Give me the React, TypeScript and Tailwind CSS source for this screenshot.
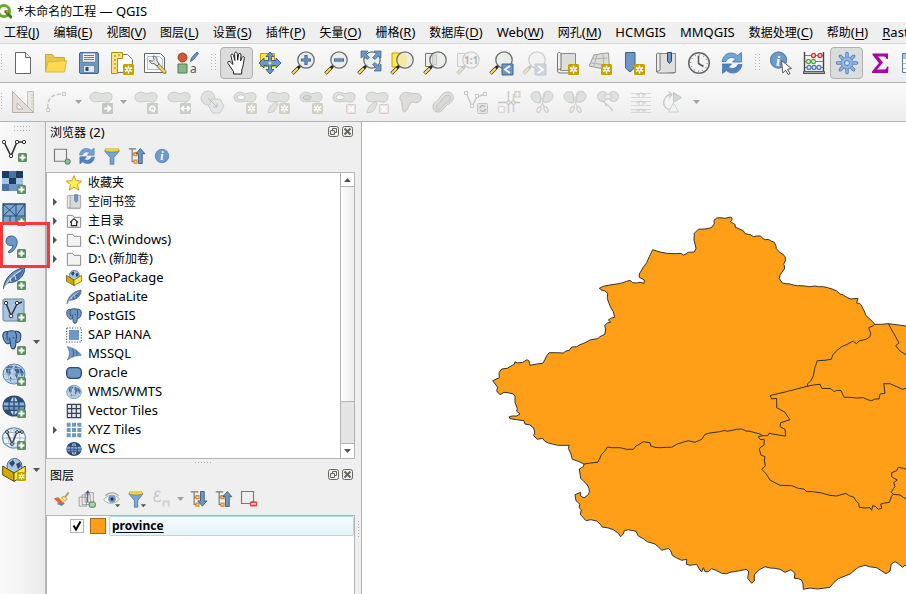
import { Fragment, type ReactNode } from "react";

/* ---------- shared drawing helpers ---------- */

function Svg({ children, className = "size-6" }: { children: ReactNode; className?: string }) {
  return (
    <svg viewBox="0 0 24 24" className={`${className} block shrink-0 overflow-visible`} fill="none" aria-hidden="true">
      {children}
    </svg>
  );
}

function Spark({ x = 13, y = 13, color = "#c4a000" }: { x?: number; y?: number; color?: string }) {
  return (
    <g transform={`translate(${x} ${y})`}>
      <rect width="11" height="11" rx="1.5" fill={color} />
      <path d="M5.5 1.5v8M2 3.5l7 4M9 3.5l-7 4" stroke="#fff" strokeWidth="1.5" />
      <circle cx="5.5" cy="5.5" r="2" fill="#fff" />
      <circle cx="5.5" cy="5.5" r="0.9" fill={color} />
    </g>
  );
}

function Plus({ x = 15, y = 15 }: { x?: number; y?: number }) {
  return (
    <g transform={`translate(${x} ${y})`}>
      <rect width="9" height="9" rx="1.5" fill="#5b8f5e" />
      <path d="M4.5 1.5v6M1.5 4.5h6" stroke="#fff" strokeWidth="2" />
    </g>
  );
}

function Lens({ children, muted = false }: { children?: ReactNode; muted?: boolean }) {
  return (
    <>
      <path d="M1.5 22.5l6-6" stroke={muted ? "#bdbdbd" : "#3c3a2a"} strokeWidth="3.6" />
      <path d="M1.8 22.2l5-5" stroke={muted ? "#e6e2c8" : "#fcd94f"} strokeWidth="2.2" />
      <path d="M7 17l3-3" stroke={muted ? "#c4c4c4" : "#222"} strokeWidth="2.6" />
      <circle cx="15" cy="9" r="8.2" fill={muted ? "#f1f1f1" : "#e9ebe9"} fillOpacity="0.85" stroke={muted ? "#cfcfcf" : "#6e6e6e"} strokeWidth="1.3" />
      {children}
    </>
  );
}

const BLUE = "#6d97c4";
const NAVY = "#2b4a70";

/* ---------- main toolbar icons ---------- */

const NewFile = (
  <Svg>
    <path d="M4.500 1.500h10l5 5v16h-15z" fill="#fff" stroke="#666" />
    <path d="M14.500 1.500v5h5" fill="#eee" stroke="#666" />
  </Svg>
);
const OpenFolder = (
  <Svg>
    <path d="M1.500 21V3.500h7l2 3h10V11" fill="#e8c64a" stroke="#c9a93a" />
    <path d="M1.500 21L4 11l18.500-1.500L20.500 21z" fill="#fcd94f" stroke="#d9b93f" />
  </Svg>
);
const SaveDisk = (
  <Svg>
    <rect x="2.500" y="1.500" width="19" height="21" rx="1.500" fill={BLUE} stroke="#43658c" />
    <path d="M5.500 2h13v9h-13z" fill="#f2f2f2" stroke="#55779f" strokeWidth="0.6" />
    <path d="M7 4.500h10M7 6.500h10M7 8.500h10" stroke="#777" />
    <path d="M6.500 14.500h11v7h-11z" fill="#e4e6e8" stroke="#43658c" strokeWidth="0.6" />
    <path d="M8.500 16h3v4h-3z" fill={NAVY} />
  </Svg>
);
const NewLayout = (
  <Svg>
    <path d="M2.500 3.500h15l5 5v13h-20z" fill="#fff" stroke="#777" />
    <path d="M1.500 1.500h11v6h-5v15h-6z" fill="#fbe27a" stroke="#b38f12" />
    <path d="M4 5h2M4 9h2M4 13h2M4 17h2M9 3v2" stroke="#a07f10" />
    <Spark />
  </Svg>
);
const LayoutManager = (
  <Svg>
    <path d="M1.500 2.500h16l4 4v15h-20z" fill="#fff" stroke="#666" />
    <path d="M4.500 5.500h12l3 3v10h-15z" fill="#f4f7fb" stroke="#a9c1de" />
    <path d="M14 13l7.500 8" stroke="#8a7a3a" strokeWidth="4" strokeLinecap="round" />
    <path d="M15 14l6.300 6.700" stroke="#f0d060" strokeWidth="2.500" strokeLinecap="round" />
    <path d="M10 5c2-.2 4.500 1.500 4 5l2 3-2 2-3-2.500c-2.500.7-4-.5-4.500-3l3 .8 1.500-1.800z" fill="#e5e5e5" stroke="#666" />
  </Svg>
);
const StyleManager = (
  <Svg>
    <circle cx="6.500" cy="6.500" r="4.500" fill="#cf5a30" stroke="#a5411d" />
    <path d="M14.500 10.500l1-3.500 5.500-6 1.500 1.500-5 6z" fill={BLUE} stroke="#43658c" />
    <path d="M2 13h9v9H2z" fill="#86b886" stroke="#4c7d4e" />
    <text x="14" y="22" fontSize="12" fill="#555" fontFamily="Noto Sans, sans-serif">a</text>
  </Svg>
);
const Hand = (
  <Svg>
    <path
      d="M8.500 23v-2.500L3 12.500c-1-1.600.9-3 2.300-1.600L8 13.500 6 5c-.5-2 1.800-2.600 2.400-.8L9.900 9.500 9.600 2.600c0-2 2.600-2 2.700 0l.4 6.600.9-5.800c.4-1.700 2.500-1.300 2.400.5l-.4 6 1.500-3.500c.7-1.600 2.700-.9 2.300.8-1 4-.9 7.800-2.700 11.800v4z"
      fill="#fff"
      stroke="#222"
      strokeLinejoin="round"
    />
  </Svg>
);
const PanSelection = (
  <Svg>
    <path d="M2.500 2.500h14v13h-14z" fill="#fce94f" stroke="#c4a000" />
    <path
      d="M12 1l4 4.500h-2.500v4H18V7l5 5-5 5v-2.500h-4.500v4H16L12 23l-4-4.500h2.500v-4H6V17l-5-5 5-5v2.500h4.500v-4H8z"
      fill={BLUE}
      stroke="#2f5b8c"
      strokeWidth="0.9"
      strokeLinejoin="round"
    />
    <path d="M10.800 10.800h2.400v2.400h-2.400z" fill="#fce94f" />
  </Svg>
);
const ZoomIn = (
  <Svg>
    <Lens>
      <path d="M15 4v10M10 9h10" stroke="#34618f" strokeWidth="3.200" />
      <path d="M15 4.700v8.600M10.700 9h8.600" stroke={BLUE} strokeWidth="1.600" />
    </Lens>
  </Svg>
);
const ZoomOut = (
  <Svg>
    <Lens>
      <path d="M10 9h10" stroke="#34618f" strokeWidth="3.200" />
      <path d="M10.700 9h8.600" stroke={BLUE} strokeWidth="1.600" />
    </Lens>
  </Svg>
);
const ZoomFull = (
  <Svg>
    <Lens />
    <path
      d="M4 0h7L8.500 2.500l4 4-2.500 2-3.500-3.500L4 7zM24 0h-7l2.500 2.500-4 4 2.500 2L21.500 5 24 7zM24 20h-7l2.500-2.500-4-4 2.500-2 3.500 3.500L24 13z"
      fill={BLUE}
      stroke="#3b648f"
      strokeWidth="0.7"
    />
  </Svg>
);
const ZoomSelection = (
  <Svg>
    <path d="M2 2h11v14H2z" fill="#fce94f" stroke="#c4a000" />
    <Lens>
      <path d="M15 3c3 2 3 10 0 13-4 0-7-3-7-7s3-6.500 7-6z" fill="#f2eaa5" />
    </Lens>
  </Svg>
);
const ZoomLayer = (
  <Svg>
    <path d="M2.500 2.500h11v13h-11z" fill="#eee" stroke="#777" />
    <Lens>
      <path d="M9.500 4.500h4v9h-4z" fill="#dcdedc" stroke="#c5c8c5" />
    </Lens>
  </Svg>
);
const ZoomNative = (
  <Svg>
    <path d="M1.500 2.500h11v13h-11z" fill="#f1f1f1" stroke="#ccc" />
    <Lens muted />
    <text x="8" y="13" fontSize="10" fontWeight="700" fill="#b4b4b4" fontFamily="Noto Sans, sans-serif">1:1</text>
  </Svg>
);
const ZoomLast = (
  <Svg>
    <Lens />
    <path d="M13 13h11v11H13z" fill={BLUE} stroke="#3f6792" />
    <path d="M21 15l-5 3.500 5 3.500" stroke="#fff" strokeWidth="1.800" />
  </Svg>
);
const ZoomNext = (
  <Svg>
    <Lens muted />
    <path d="M13 13h11v11H13z" fill="#cdd3d9" stroke="#c4c9ce" />
    <path d="M16 15l5 3.500-5 3.500" stroke="#fff" strokeWidth="1.800" />
  </Svg>
);
const NewMapView = (
  <Svg>
    <path d="M5.500 2.500h15v17h-15z" fill="#dcdddc" stroke="#8a8a8a" />
    <path d="M2.500 3c0-2 3.500-2 3.500 0v15c-2 0-3.500.5-3.500 2zM2.500 20c0 1.500 1 2 2.500 2h9" fill="#eee" stroke="#777" />
    <Spark />
  </Svg>
);
const New3DView = (
  <Svg>
    <path d="M1 15l5-11 8-1.500L20.500 2l1 17z" fill="#dcdcdb" stroke="#9b9b9b" />
    <path d="M5 8l14-1M3 12l16 2M9 4l-3 11M15 3l1 14" stroke="#b2b2b0" />
    <Spark />
  </Svg>
);
const NewBookmark = (
  <Svg>
    <path d="M4.500 1.500h9.500v15L9 21l-4.500-4z" fill={BLUE} stroke="#3b648f" />
    <Spark />
  </Svg>
);
const ShowBookmarks = (
  <Svg>
    <path d="M5.500 2.500h16v19h-16z" fill="#dedfde" stroke="#8a8a8a" />
    <path d="M2.500 3c0-1 3.500-1.500 3.500 0v16c0 1-3.500 1-3.500 2zM2.500 20c0 2 2 2 3 2h15" fill="#eee" stroke="#777" />
    <path d="M13.500 1.500h4V10l-2 2.500-2-2.500z" fill={BLUE} stroke={NAVY} />
  </Svg>
);
const Clock = (
  <Svg>
    <circle cx="12" cy="12" r="10.300" fill="#f2f3f2" stroke="#666" strokeWidth="1.500" />
    <circle cx="12" cy="12" r="8.300" stroke="#6d97c4" strokeWidth="1.300" strokeDasharray="0.9 3.440" />
    <path d="M11.500 4.500v8l5 3" stroke="#555" strokeWidth="1.500" />
  </Svg>
);
function Refresh({ className = "size-6" }: { className?: string }) {
  return (
    <Svg className={className}>
      <path d="M2 10.500C3 5 6.500 2 11 2c3 0 5 1 6.500 2.500L21.500 1.500v9.500h-9l3-3.200C12.500 5.500 8 6 6 10.500z" fill="#75a5d8" stroke="#3f74ad" strokeWidth="0.8" />
      <path d="M22 13.500C21 19 17.500 22 13 22c-3 0-5-1-6.500-2.500L2.500 22.500V13h9l-3 3.200c3 2.300 7.500 1.800 9.500-2.700z" fill="#4f84bf" stroke="#3f74ad" strokeWidth="0.800" />
    </Svg>
  );
}
const Identify = (
  <Svg>
    <circle cx="9.500" cy="9" r="8.600" fill="#6c9bc9" />
    <circle cx="9.500" cy="9" r="8" stroke="#4f7fb1" />
    <text x="7" y="14.500" fontSize="15" fontStyle="italic" fontWeight="700" fill="#fff" fontFamily="Liberation Serif, serif">i</text>
    <path d="M12.500 9.500l10 8-4 .8 2.500 4.200-2 1-2.400-4.300-2.800 2.800z" fill="#fff" stroke="#555" />
  </Svg>
);
const Abacus = (
  <Svg>
    <path d="M2.500 1v19.500M21.500 1v19.500M1 22h22" stroke="#444" strokeWidth="1.400" />
    <path d="M1.500 20.500h21v2h-21z" fill="#aaa" stroke="#444" strokeWidth="0.800" />
    <path d="M3 4.500h18M3 10.500h18M3 16.500h18" stroke="#777" />
    <g fill="#fbe3e3" stroke="#c13c34" strokeWidth="1.300">
      <circle cx="11.500" cy="4.500" r="2" />
      <circle cx="18" cy="4.500" r="2" />
    </g>
    <g fill="#e6f6e3" stroke="#5da357" strokeWidth="1.300">
      <circle cx="6.500" cy="10.500" r="2" />
      <circle cx="11.500" cy="10.500" r="2" />
    </g>
    <g fill="#e4eef9" stroke="#4f80b4" strokeWidth="1.300">
      <circle cx="7" cy="16.500" r="2" />
      <circle cx="12" cy="16.500" r="2" />
      <circle cx="17" cy="16.500" r="2" />
    </g>
  </Svg>
);
const Gear = (
  <Svg>
    <g stroke="#4f80bb" strokeWidth="3.400" strokeLinecap="round">
      <path d="M12 2.500v19M2.500 12h19M5.300 5.300l13.400 13.400M18.700 5.300L5.300 18.700" />
    </g>
    <g stroke="#8db4e2" strokeWidth="1.900" strokeLinecap="round">
      <path d="M12 2.700v18.600M2.700 12h18.600M5.500 5.500l13 13M18.500 5.500l-13 13" />
    </g>
    <circle cx="12" cy="12" r="6" fill="#8db4e2" stroke="#6694cc" />
    <circle cx="12" cy="12" r="2.500" fill="#dcdcdc" stroke="#4f80bb" />
  </Svg>
);
const Sigma = (
  <Svg>
    <path d="M4.500 2.500H20V8h-1.500c-.5-2-1-2.600-3.500-2.600h-5l5 6.100-6 7h6c2.500 0 3.500-.5 4-3H20.500l-.5 6.500H4v-1.500l7-8.500-6.500-8z" fill="#ad00ad" />
  </Svg>
);
const TableIcon = (
  <Svg>
    <path d="M1.500 2.500h21v19h-21z" fill="#fff" stroke="#4f7fb1" />
    <path d="M2 3h20v4H2z" fill="#a9c6e6" />
    <path d="M2 7.500h20M2 12.500h20M2 17.500h20M8.500 7v14" stroke="#a0b8d2" />
  </Svg>
);

/* ---------- digitizing toolbar icons (all disabled) ---------- */

const BLOB = "M1 8c-.5-4 4-7 8-5.500 2.500 1 4 1.500 7 .5 3-1 7-.5 7 3.500s-3 6.500-6 5.500c-2.500-.8-4-1-7-.5C6 12.200 1.500 12 1 8z";
const LOBE = "M11 12C6 13 2.500 18 2 22.500c4 .5 7-1 8-4 .5-2.500 3-5 1-6.500z";
const FILL = "#dfe1df";
const LINE = "#c8cbc8";

function Shape({ children }: { children?: ReactNode }) {
  return (
    <Svg>
      <path d={BLOB} fill={FILL} stroke={LINE} />
      {children}
    </Svg>
  );
}
function Ring() {
  return <path d="M4 7.500c0-2 3-3.500 5-2.500 1.500 1 4 1 3 3s-8 2.500-8-.5z" fill="#f8f8f8" stroke="#c3c6c3" />;
}
function MutedCross({ x = 14, y = 14 }: { x?: number; y?: number }) {
  return (
    <g transform={`translate(${x} ${y})`}>
      <rect x="0.500" y="0.500" width="9" height="9" rx="1" fill="#ebe2e2" stroke="#dccaca" />
      <path d="M2.500 2.500l5 5M7.500 2.500l-5 5" stroke="#fff" strokeWidth="2" />
    </g>
  );
}
const Ruler = (
  <Svg>
    <path d="M16.500 1.500h6v21h-6z" fill="#ebe8e0" stroke="#c9c3bd" />
    <path d="M20 5h2M20 8h2M20 11h2M20 14h2M20 17h2" stroke="#c9c3bd" />
    <path d="M1.500 1.500l21 21h-21z" fill="#e3dfd8" stroke="#b9b0aa" />
    <path d="M6 13l6 6H6z" fill="#f8f8f8" stroke="#b9b0aa" />
  </Svg>
);
const CurveDigitize = (
  <Svg>
    <path d="M4 18c-1-8 3-14 14-14" stroke="#c6c6c6" strokeWidth="1.500" strokeDasharray="4 2" />
    <path d="M2.500 18.500h3v3h-3zM18.500 2.500h3v3h-3z" fill="#f4f4f4" stroke="#c6c6c6" />
  </Svg>
);
const MoveFeature = (
  <Shape>
    <rect x="13" y="13" width="11" height="11" rx="1" fill="#c3c6c5" />
    <path d="M15 18.500h6M18.500 15.500l3 3-3 3" stroke="#fff" strokeWidth="2" />
  </Shape>
);
const RotateFeature = (
  <Shape>
    <rect x="13" y="13" width="11" height="11" rx="1" fill="#cbcdcc" />
    <path d="M16.500 21c-2-3 .5-5.500 3-4.500 2.500 1.200 1.500 4.500-1 4.500M18 18.800l.5 2.500 2.500.2" stroke="#fff" strokeWidth="1.500" />
  </Shape>
);
const ScaleFeature = (
  <Shape>
    <rect x="13" y="13" width="11" height="11" rx="1" fill="#cbcdcc" />
    <path d="M15 18.500h7M17 16l-2.500 2.500L17 21M20 16l2.500 2.500L20 21" stroke="#fff" strokeWidth="1.500" />
  </Shape>
);
const Simplify = (
  <Svg>
    <circle cx="8" cy="8" r="7" fill={FILL} stroke={LINE} />
    <path d="M8.500 16l4-7h7.500l4 7-4 7h-7.500z" fill="#e3e7ea" stroke={LINE} />
    <path d="M8 8l9 9M17 13v4h-4" stroke="#bdbdbd" />
  </Svg>
);
const AddRing = (
  <Shape>
    <Ring />
    <Spark color="#d3cfc2" />
  </Shape>
);
const AddPart = (
  <Shape>
    <path d={LOBE} fill={FILL} stroke={LINE} />
    <Spark color="#d3cfc2" />
  </Shape>
);
const FillRing = (
  <Shape>
    <path d="M4 8c0-2 3-3.500 5-2.500 1.500 1 4 0 3 2.500s-8 2.500-8 0z" fill="#d3d5d0" stroke="#bcbeb9" />
    <Spark color="#d3cfc2" />
  </Shape>
);
const DeleteRing = (
  <Shape>
    <Ring />
    <MutedCross />
  </Shape>
);
const DeletePart = (
  <Shape>
    <path d={LOBE} fill={FILL} stroke={LINE} />
    <MutedCross />
  </Shape>
);
const Reshape = (
  <Svg>
    <path d="M2 9c-1-4 4-7.500 8-6.500 4 1 5 1 8 1 4 0 6 2 5 6-2 4-6 3.500-9 2.500-4 2-3 9-8 10-3-1 0-8-4-13z" fill="#dcdddb" stroke="#c3c6c3" />
    <path d="M3 13c2 3 1 8 3 9 4-1 4-8 8-10" stroke="#d8cfc0" />
  </Svg>
);
const OffsetCurve = (
  <Svg>
    <path d="M2 17c0-5 4-5 6-8s4-7 9-7c4 0 6 4 5 7-2 5-6 5-8 8s-4 5-7 5-5-2-5-5z" fill="#e2e0da" stroke="#c5c2b8" />
    <path d="M5 17c0-3 3-3 5-6s4-6 7-6 3 3 2 5c-2 3-5 3-7 6s-3 4-5 4-2-1-2-3z" fill="#d7dbd8" stroke="#c3c6c3" />
  </Svg>
);
const ReverseLine = (
  <Svg>
    <path d="M2 3l6 13 5-9 8-3" stroke="#c9c9c9" strokeWidth="1.500" />
    <path d="M.5 1.500h3v3h-3zM6.500 14.500h3v3h-3zM11.500 4.500h3v3h-3zM19.500 2.500h3v3h-3z" fill="#f4f4f4" stroke="#c9c9c9" />
    <rect x="13.500" y="13.500" width="10" height="10" rx="1" fill="#e4e4e4" stroke="#c4c4c4" />
    <path d="M16 18c1-3 4-3 5-1M21.500 19c-1 3-4 3-5 1" stroke="#b2b2b2" strokeWidth="1.400" />
  </Svg>
);
const TrimExtend = (
  <Svg>
    <path d="M11.500 1v22M16.500 4v18" stroke="#cfcfc8" strokeWidth="1.600" />
    <path d="M1 12.500h22" stroke="#c4c4c4" strokeWidth="1.500" />
    <path d="M10 11h3v3h-3zM15 11h3v3h-3z" fill="#f4f4f4" stroke="#c4c4c4" />
    <g transform="translate(17 1) scale(0.600)">
      <rect width="11" height="11" rx="1.500" fill="#d3cfc2" />
      <path d="M5.500 1.500v8M2 3.500l7 4M9 3.500l-7 4" stroke="#fff" strokeWidth="1.500" />
    </g>
    <g transform="translate(1 16) scale(0.700)">
      <MutedCross x={0} y={0} />
    </g>
  </Svg>
);
const Scissors = (
  <Svg>
    <path d="M1 6c0-4 5-5 8-4 2 2 2 7 1 11-5 0-9-3-9-7zM23 6c0-4-5-6-8-4-2 2-3 8-1 10 5 1 9-2 9-6z" fill={FILL} stroke={LINE} />
    <path d="M10 4l4 13M15 4l-4 13" stroke="#cfcfcf" />
    <ellipse cx="9" cy="19.500" rx="1.700" ry="3" transform="rotate(25 9 19.500)" stroke="#d3caca" strokeWidth="1.300" />
    <ellipse cx="16" cy="19.500" rx="1.700" ry="3" transform="rotate(-25 16 19.500)" stroke="#d3caca" strokeWidth="1.300" />
  </Svg>
);
const MergeFeatures = (
  <Svg>
    <circle cx="6.500" cy="6.500" r="5" fill={FILL} stroke={LINE} />
    <circle cx="17.500" cy="6.500" r="5" fill={FILL} stroke={LINE} />
    <path d="M9 4h6v5H9z" fill="#ebebeb" stroke={LINE} />
    <path d="M4 11c4 0 6 2 6 5M8 12c3 3 6 4 9 9" stroke="#cfcfcf" strokeWidth="1.500" />
  </Svg>
);
const MergeAttributes = (
  <Svg>
    <path d="M2 3.500h20M2 7.500h20M2 11.500h20M2 15.500h20M2 19.500h20M2 22.500h20" stroke="#d8d8d8" />
    <path d="M7 5l5-2 5 2M7 13l5-2 5 2M7 21l5-2 5 2M10 3v4M14 3v4M10 11v4M14 11v4M10 19v3M14 19v3" stroke="#cbcbcb" />
  </Svg>
);
const RotateSymbols = (
  <Svg>
    <path d="M9 20C2 19 0 13 3 8.500 4.500 5.500 7 4.500 9 4.500" stroke="#c8c8c8" strokeWidth="1.300" />
    <path d="M6.500 1.500l3.500 3-3 3.500" stroke="#c8c8c8" strokeWidth="1.300" />
    <path d="M11.500 2.500v10l8-5z" fill="#d3d7d3" stroke="#c3c6c3" />
    <path d="M11.500 13l5 9h-10z" fill="#f2f2f2" stroke="#cfcfcf" />
  </Svg>
);

/* ---------- data source icons ---------- */

function Elephant() {
  return (
    <>
      <path
        d="M1 8c-.5-4 2-6.500 6-6 2-1 7-1.500 9-.3C20 1 23.500 3 23 8c-.3 4-2 7-3.500 7-1.500.3-2 .5-2.500 0-.5 4 0 8-3.500 8-3 0-3-3.500-3.300-7.500C8 17 6.500 17.500 5 16 3 14 1.300 11 1 8z"
        fill={BLUE}
        stroke={NAVY}
        strokeWidth="1.300"
      />
      <path d="M7 2.500C5.500 6 6 10 7.500 12.500M16 2c2 3 2 8 .5 12.500M10 15.500c-.5-2 0-4-1-6M13 9.500h2" stroke={NAVY} strokeWidth="1.300" />
    </>
  );
}
function Feather() {
  return (
    <>
      <path d="M1.500 22.500C2 14 9 4 22.500 1.500c.5 5-2 10-7.500 13-4 2.500-8 1.500-9.500 2.500-1.500 1-2.500 3-4 5.500z" fill={BLUE} stroke={NAVY} />
      <path d="M5 17c4 0 9-1 12-5 2-2.500 4-6 5-9-5 3-12 8-17 14z" fill="#48709e" />
      <path d="M2 22C5 16 11 9 19 4.500M9 16l-1-4M14 14l-1.500-5" stroke="#dbe8f6" />
    </>
  );
}
function Earth() {
  return (
    <>
      <ellipse cx="12" cy="12" rx="11" ry="10" fill="#c3d8ee" stroke="#5c82ab" />
      <path d="M4 6c2-2 5-3 7-2l-1 3-2 1 1 3-2 3-3-4zM13 4l6 2 3 5-2 4-2-4-2 1-1 5-2-4 1-3-2-2zM8 14l2 3-2 3z" fill="#3f6690" />
      <path d="M2 12h20M4 6.500h16M4 17.500h16M12 2v20M12 2C4 6 4 18 12 22M12 2c8 4 8 16 0 20" stroke="#8fb0d4" strokeWidth="0.900" />
    </>
  );
}
function GridGlobe() {
  return (
    <>
      <ellipse cx="12" cy="12" rx="11.500" ry="10.500" fill={NAVY} />
      <path d="M2 8.500h4.500v3H1.500zM8 8.500h3.400v3H7.500zM12.600 8.500H16l.5 3h-3.900zM17.500 8.500H22l.5 3h-5z" fill="#8db4e0" />
      <path d="M1.500 12.700h4.800l.4 3H2.500zM7.500 12.700h3.900v3H8zM12.600 12.700h3.900l-.5 3h-3.400zM17.700 12.700h4.800l-1 3h-4z" fill="#6d97c4" />
      <path d="M8.500 7.300c.5-2 1.500-3.300 2.900-4.300v4.300zM12.600 7.300V3c1.400 1 2.400 2.300 2.900 4.300zM8.500 17h2.900v4c-1.400-.8-2.400-2-2.900-4zM12.600 17h2.900c-.5 2-1.500 3.200-2.900 4z" fill="#b9d2ee" />
    </>
  );
}
function Nodes() {
  return (
    <>
      <path d="M2 4l7 14 6-14h7" stroke="#333" strokeWidth="1.600" />
      <g fill="#fff" stroke="#333">
        <circle cx="2" cy="4" r="1.700" />
        <circle cx="9" cy="18" r="1.700" />
        <circle cx="15" cy="4" r="1.700" />
        <circle cx="22" cy="4" r="1.700" />
      </g>
    </>
  );
}
function Box() {
  return (
    <>
      <circle cx="12.500" cy="8" r="7.500" fill="#a9c5e4" stroke="#466a92" />
      <path d="M7 5l4-3 2 3-3 4zM14 6l4-2 1 4-3 3z" fill={NAVY} />
      <path d="M.7 8l11.300 7v8.300L.7 17z" fill="#d3a90c" stroke="#5e4b00" />
      <path d="M23.300 8L12 15v8.300L23.300 17z" fill="#fce94f" stroke="#5e4b00" />
    </>
  );
}

const dataSources: { label: string; icon: ReactNode; menu?: boolean; marked?: boolean }[] = [
  { label: "添加矢量图层", icon: <Svg><Nodes /><Plus x={16} y={15} /></Svg> },
  {
    label: "添加栅格图层",
    icon: (
      <Svg>
        <path d="M0 1h21v20H0z" fill={BLUE} />
        <path d="M0 1h7v7H0zM14 1h7v7h-7zM7 8h7v6H7z" fill="#1d3c61" />
        <path d="M7 1h7v7H7zM0 14h7v7H0z" fill="#4a74a4" />
        <path d="M0 8h7v6H0zM14 8h7v6h-7z" fill="#a4c2e2" />
        <Plus />
      </Svg>
    ),
  },
  {
    label: "添加网格图层",
    icon: (
      <Svg>
        <path d="M1 2h22v19H1z" fill="#7ba5d3" stroke={NAVY} strokeWidth="1.300" />
        <path d="M14 2v19M1 14h22M1 2l13 12M14 2L1 14M23 2l-9 12M8 14v7" stroke={NAVY} />
        <Plus />
      </Svg>
    ),
  },
  {
    label: "添加分隔文本图层",
    marked: true,
    icon: (
      <Svg>
        <path d="M9 2c4 0 7 3 6 8-.8 4-4 8-8 9l-.7-1.500C9 15.500 11 14 11 11c-3 1.500-7 0-7-4 0-3 2-5 5-5z" fill={BLUE} stroke="#3b648f" />
        <Plus />
      </Svg>
    ),
  },
  { label: "添加 SpatiaLite 图层", icon: <Svg><Feather /><Plus /></Svg> },
  {
    label: "添加虚拟图层",
    icon: (
      <Svg>
        <rect x="1" y="1" width="21" height="22" rx="1.500" fill="#a8c4e2" stroke="#66839f" />
        <path d="M4 5l5 13 6-12 5-2" stroke="#333" strokeWidth="1.500" />
        <circle cx="9" cy="18" r="1.800" fill="#fff" stroke="#333" />
        <circle cx="4" cy="5" r="1.700" fill="#fff" stroke="#333" />
        <circle cx="15" cy="5" r="1.700" fill="#fff" stroke="#333" />
        <Plus />
      </Svg>
    ),
  },
  { label: "添加 PostGIS 图层", menu: true, icon: <Svg><g transform="scale(0.820)"><Elephant /></g><Plus y={16} /></Svg> },
  { label: "添加 WMS/WMTS 图层", icon: <Svg><Earth /><Plus /></Svg> },
  { label: "添加 WCS 图层", icon: <Svg><GridGlobe /><Plus /></Svg> },
  {
    label: "添加 WFS 图层",
    icon: (
      <Svg>
        <ellipse cx="12" cy="12" rx="11.500" ry="10" fill="#f4f8fc" stroke={BLUE} strokeWidth="1.300" />
        <path d="M1 12h22M3 6.500h18M3 17.500h18M12 2v20M12 2C4 6 4 18 12 22M12 2c8 4 8 16 0 20" stroke="#9dbbdc" />
        <path d="M5 6l5 12 5-12h5" stroke="#333" strokeWidth="1.400" />
        <g fill="#fff" stroke="#333">
          <circle cx="5" cy="6" r="1.400" />
          <circle cx="10" cy="18" r="1.400" />
          <circle cx="15" cy="6" r="1.400" />
          <circle cx="20" cy="6" r="1.400" />
        </g>
        <Plus />
      </Svg>
    ),
  },
  { label: "新建 GeoPackage 图层", menu: true, icon: <Svg><Box /><g transform="translate(15 14) scale(0.820)"><Spark x={0} y={0} /></g></Svg> },
];

/* ---------- browser tree ---------- */

const small = "size-4";
const FolderSmall = (
  <Svg className={small}>
    <path d="M2 21.500v-18h8l2 3h10v15z" fill="#f3f3f3" stroke="#8b8b8b" strokeWidth="1.500" />
  </Svg>
);

const treeItems: { label: string; icon: ReactNode; open?: boolean }[] = [
  {
    label: "收藏夹",
    icon: (
      <Svg className={small}>
        <path d="M12 1l3.200 7.600 8.300.6-6.300 5.400 2 8.100-7.200-4.400-7.200 4.400 2-8.100L.5 9.200l8.300-.6z" fill="#fff34a" stroke="#c79a1e" strokeWidth="1.500" />
      </Svg>
    ),
  },
  {
    label: "空间书签",
    open: true,
    icon: (
      <Svg className={small}>
        <path d="M6 2h16v19H6z" fill="#d9dadb" stroke="#aaa" strokeWidth="1.500" />
        <path d="M2 3l4-1v18l-4 1.500zM3 22h18" fill="#eee" stroke="#aaa" strokeWidth="1.500" />
        <path d="M13 1h4.500v9l-2.200 2.500L13 10z" fill={BLUE} stroke="#4a75a5" />
      </Svg>
    ),
  },
  {
    label: "主目录",
    open: true,
    icon: (
      <Svg className={small}>
        <path d="M2 21.500v-18h8l2 3h10v15z" fill="#f3f3f3" stroke="#8b8b8b" strokeWidth="1.500" />
        <path d="M6 14l6-5.500 6 5.500M8 13v6h8v-6" stroke="#222" strokeWidth="1.700" />
      </Svg>
    ),
  },
  { label: "C:\\ (Windows)", open: true, icon: FolderSmall },
  { label: "D:\\ (新加卷)", open: true, icon: FolderSmall },
  { label: "GeoPackage", icon: <Svg className={small}><Box /></Svg> },
  { label: "SpatiaLite", icon: <Svg className={small}><Feather /></Svg> },
  { label: "PostGIS", icon: <Svg className={small}><Elephant /></Svg> },
  {
    label: "SAP HANA",
    icon: (
      <Svg className={small}>
        <path d="M4.500 4.500h15v15h-15z" fill={BLUE} />
        <path d="M1 1.500h22v21H1z" stroke="#34506f" strokeWidth="1.700" strokeDasharray="1.700 2.300" />
      </Svg>
    ),
  },
  {
    label: "MSSQL",
    icon: (
      <Svg className={small}>
        <path d="M2 1c8 2 16 5 21 13-7 0-14 2-21 7 4-6 4-14 0-20z" fill={BLUE} stroke="#486d95" />
        <path d="M9 3.500c3 4 3 9 1 13M15 6.500c2 3 2 6 1 8.500" stroke="#39597d" strokeWidth="1.300" />
      </Svg>
    ),
  },
  {
    label: "Oracle",
    icon: (
      <Svg className={small}>
        <rect x="1" y="4" width="22" height="16" rx="6" fill={BLUE} stroke={NAVY} strokeWidth="2" />
      </Svg>
    ),
  },
  { label: "WMS/WMTS", icon: <Svg className={small}><Earth /></Svg> },
  {
    label: "Vector Tiles",
    icon: (
      <Svg className={small}>
        <path d="M2 2h20v20H2z" fill="#dfe7f1" stroke="#39414d" strokeWidth="1.800" />
        <path d="M8.500 2v20M15.500 2v20M2 8.500h20M2 15.500h20" stroke="#39414d" strokeWidth="1.800" />
      </Svg>
    ),
  },
  {
    label: "XYZ Tiles",
    open: true,
    icon: (
      <Svg className={small}>
        <path d="M1 1h6v6H1zM9 1h6v6H9zM17 1h6v6h-6zM1 9h6v6H1zM9 9h6v6H9zM17 9h6v6h-6zM1 17h6v6H1zM9 17h6v6H9zM17 17h6v6h-6z" fill={BLUE} />
      </Svg>
    ),
  },
  { label: "WCS", icon: <Svg className={small}><GridGlobe /></Svg> },
];

/* ---------- dock toolbar icons ---------- */

const dock = "size-[18px]";
const Funnel = (
  <Svg className={dock}>
    <path d="M2 5c6 2.500 14 2.500 20 0l-7.500 9v9h-5v-9z" fill="#7ba5d3" stroke="#4a75a5" />
    <path d="M3 2.500h18v3H3z" fill="#fce94f" stroke="#c4a000" />
  </Svg>
);
function TreeArrow({ down = false }: { down?: boolean }) {
  return (
    <Svg className={dock}>
      <path d="M1 2.500h10M5.500 3v17M6 9.500h3M6 19.500h3" stroke="#777" strokeWidth="1.500" />
      <path d="M8 7.500h4v4H8zM8 17.500h4v4H8z" fill="#fcd9a8" stroke="#e08a1e" strokeWidth="1.500" />
      <path d={down ? "M16.500 21.500l-6-7H14V2h5v12.500h3.500z" : "M16.500 2l6 7H19v13h-5V9h-3.500z"} fill={BLUE} stroke={NAVY} />
    </Svg>
  );
}

const browserTools: Tool[] = [
  {
    label: "添加选定图层",
    icon: (
      <Svg className={dock}>
        <path d="M2 3h16v16H2z" stroke="#777" strokeWidth="1.500" />
        <circle cx="19.500" cy="19.500" r="3.500" fill="#8dc492" stroke="#3f8348" strokeWidth="1.300" />
      </Svg>
    ),
  },
  { label: "刷新", icon: <Refresh className="size-[18px]" /> },
  { label: "过滤浏览器", icon: Funnel },
  { label: "全部折叠", icon: <TreeArrow /> },
  {
    label: "属性",
    icon: (
      <Svg className={dock}>
        <circle cx="12" cy="12" r="9" fill="#6c9bc9" stroke="#4f7fb1" />
        <text x="9.500" y="17.500" fontSize="16" fontStyle="italic" fontWeight="700" fill="#fff" fontFamily="Liberation Serif, serif">i</text>
      </Svg>
    ),
  },
];

const layerTools: Tool[] = [
  {
    label: "打开图层样式面板",
    icon: (
      <Svg className={dock}>
        <path d="M15 11l6-8" stroke="#b8975a" strokeWidth="2.500" />
        <path d="M7 9l8 7-4 5-9-10z" fill="#ffc83a" />
        <path d="M1 11l6-1 7 8-3 3z" fill="#e2604c" />
        <path d="M11 10l5 5 3-3-4-4z" fill="#f0dca0" stroke="#b38f3e" />
        <path d="M6 18l6 2 3-3" stroke="#5a86c0" strokeWidth="2" />
      </Svg>
    ),
  },
  {
    label: "添加组",
    icon: (
      <Svg className={dock}>
        <path d="M1.500 9.500h10v12h-10zM5.500 6.500h11v13h-11zM9.500 3.500h11v13h-11z" stroke="#888" />
        <path d="M13 2v14M11 5l2-4 2 4" stroke={NAVY} strokeWidth="1.300" />
        <rect x="15" y="16" width="8" height="7" rx="2" fill="#a8d3ac" stroke="#3f8348" strokeWidth="1.300" />
      </Svg>
    ),
  },
  {
    label: "管理地图主题",
    icon: (
      <Svg className={dock}>
        <path d="M1 13C5 5 17 5 22 12c-5 7-16 8-21 1z" fill="#f3f3f3" stroke="#999" />
        <path d="M3 8c5-6 14-5 18 0" stroke="#aaa" strokeWidth="1.500" />
        <circle cx="12" cy="12" r="5" fill="#6c9bc9" />
        <circle cx="12" cy="12" r="2" fill="#223" />
        <path d="M16 19h7l-3.500 4z" fill="#555" />
      </Svg>
    ),
  },
  {
    label: "过滤图例",
    icon: (
      <Svg className={dock}>
        <path d="M1 5c6 2.500 13 2.500 19 0l-7 9v9H8.500v-9z" fill="#7ba5d3" stroke="#4a75a5" />
        <path d="M2 2.500h17v3H2z" fill="#fce94f" stroke="#c4a000" />
        <path d="M17 19h7l-3.500 4z" fill="#555" />
      </Svg>
    ),
  },
  {
    label: "按表达式过滤图例",
    menu: true,
    icon: (
      <Svg className={dock}>
        <path d="M10 3c-4-3-8 0-7 2.500.5 2 3 2.500 5 2-4 0-7 1.500-6.500 4.500.5 4 6 4.500 9 1.500" stroke="#c9c9c9" strokeWidth="2" />
        <path d="M14 22v-7h7v7M17.500 15v2" stroke="#d3d3d3" strokeWidth="2.500" />
      </Svg>
    ),
  },
  { label: "全部展开", icon: <TreeArrow down /> },
  { label: "全部折叠图层", icon: <TreeArrow /> },
  {
    label: "移除图层",
    icon: (
      <Svg className={dock}>
        <path d="M2 2h16v16H2z" stroke="#777" strokeWidth="1.500" />
        <rect x="13" y="15" width="10" height="7" rx="2" fill="#e6484f" />
        <path d="M15 18.500h6" stroke="#fff" strokeWidth="1.800" />
      </Svg>
    ),
  },
];

/* ---------- toolbars ---------- */

type Tool = { label: string; icon: ReactNode; active?: boolean; menu?: boolean };

const projectTools: Tool[] = [
  { label: "新建工程", icon: NewFile },
  { label: "打开工程", icon: OpenFolder },
  { label: "保存工程", icon: SaveDisk },
  { label: "新建打印布局", icon: NewLayout },
  { label: "布局管理器", icon: LayoutManager },
  { label: "样式管理器", icon: StyleManager },
];
const navigationTools: Tool[] = [
  { label: "平移地图", icon: Hand, active: true },
  { label: "平移到选区", icon: PanSelection },
  { label: "放大", icon: ZoomIn },
  { label: "缩小", icon: ZoomOut },
  { label: "全图显示", icon: ZoomFull },
  { label: "缩放到选区", icon: ZoomSelection },
  { label: "缩放到图层", icon: ZoomLayer },
  { label: "原始分辨率", icon: ZoomNative },
  { label: "上一视图", icon: ZoomLast },
  { label: "下一视图", icon: ZoomNext },
  { label: "新建地图视图", icon: NewMapView },
  { label: "新建3D视图", icon: New3DView },
  { label: "新建空间书签", icon: NewBookmark },
  { label: "显示空间书签", icon: ShowBookmarks },
  { label: "时态控制", icon: Clock },
  { label: "刷新地图", icon: <Refresh /> },
];
const attributeTools: Tool[] = [
  { label: "识别要素", icon: Identify },
  { label: "字段计算器", icon: Abacus },
  { label: "处理工具箱", icon: Gear, active: true },
  { label: "统计汇总", icon: Sigma },
  { label: "属性表", icon: TableIcon },
];
const digitizingTools: Tool[] = [
  { label: "高级数字化面板", icon: Ruler },
  { label: "曲线数字化", icon: CurveDigitize, menu: true },
  { label: "移动要素", icon: MoveFeature, menu: true },
  { label: "旋转要素", icon: RotateFeature },
  { label: "缩放要素", icon: ScaleFeature },
  { label: "简化要素", icon: Simplify },
  { label: "添加环", icon: AddRing },
  { label: "添加部件", icon: AddPart },
  { label: "填充环", icon: FillRing },
  { label: "删除环", icon: DeleteRing },
  { label: "删除部件", icon: DeletePart },
  { label: "重塑要素", icon: Reshape },
  { label: "偏移曲线", icon: OffsetCurve },
  { label: "反转线", icon: ReverseLine },
  { label: "修剪/延伸", icon: TrimExtend },
  { label: "分割要素", icon: Scissors },
  { label: "分割部件", icon: Scissors },
  { label: "合并要素", icon: MergeFeatures },
  { label: "合并属性", icon: MergeAttributes },
  { label: "旋转点符号", icon: RotateSymbols, menu: true },
];

function Caret({ className = "text-[#555]" }: { className?: string }) {
  return (
    <svg viewBox="0 0 7 4" className={`h-1 w-[7px] ${className}`} fill="currentColor" aria-hidden="true">
      <path d="M0 0h7L3.500 4z" />
    </svg>
  );
}

function Grip({ className = "w-4 justify-end pr-1" }: { className?: string }) {
  return (
    <span className={`flex shrink-0 ${className}`}>
      <svg viewBox="0 0 5 18" className="h-[18px] w-[5px] shrink-0" aria-hidden="true">
        <path d="M.5 0v18M4.500 0v18" stroke="#b5b5b5" strokeDasharray="1 2" />
      </svg>
    </span>
  );
}

function ToolGroup({ tools, disabled = false }: { tools: Tool[]; disabled?: boolean }) {
  return (
    <>
      {tools.map((tool) => (
        <Fragment key={tool.label}>
          <button
            type="button"
            aria-label={tool.label}
            disabled={disabled}
            className={`flex h-8 w-[33px] shrink-0 items-center justify-center rounded-sm ${
              tool.active ? "border border-[#b0b0b0] bg-[#dcdcdc]" : ""
            }`}
          >
            {tool.icon}
          </button>
          {tool.menu && (
            <button type="button" aria-label={`${tool.label}选项`} disabled={disabled} className="flex h-8 w-3 shrink-0 items-center justify-center">
              <Caret className="text-[#a3a3a3]" />
            </button>
          )}
        </Fragment>
      ))}
    </>
  );
}

/* Han characters sit one size below the Latin letters of the same label. */
function Label({ text }: { text: string }) {
  return (
    <>
      {text.split(/([\u4e00-\u9fff]+)/).map((part, i) => (i % 2 ? <span key={i} className="text-xs">{part}</span> : part))}
    </>
  );
}

const menus: [string, string?][] = [
  ["工程", "J"],
  ["编辑", "E"],
  ["视图", "V"],
  ["图层", "L"],
  ["设置", "S"],
  ["插件", "P"],
  ["矢量", "O"],
  ["栅格", "R"],
  ["数据库", "D"],
  ["Web", "W"],
  ["网孔", "M"],
  ["HCMGIS"],
  ["MMQGIS"],
  ["数据处理", "C"],
  ["帮助", "H"],
];

function DockHeader({ title }: { title: string }) {
  const frame = "size-3 block";
  return (
    <header className="flex h-5 shrink-0 items-center pr-[7px] pl-1">
      <h2 className="flex-1 text-[13px]"><Label text={title} /></h2>
      <div className="flex gap-0.5">
        <button type="button" aria-label={`浮动${title}`}>
          <svg viewBox="0 0 12 12" className={frame} fill="none" stroke="#66665e" aria-hidden="true">
            <rect x="0.500" y="0.500" width="10" height="10" rx="2" />
            <path d="M4.500 4.500v-2h4v4h-2M2.500 4.500h4v4h-4z" />
          </svg>
        </button>
        <button type="button" aria-label={`关闭${title}`}>
          <svg viewBox="0 0 12 12" className={frame} fill="none" stroke="#66665e" aria-hidden="true">
            <rect x="0.500" y="0.500" width="10" height="10" rx="2" />
            <path d="M2.500 2.500l6 6M8.500 2.500l-6 6" strokeWidth="2" />
          </svg>
        </button>
      </div>
    </header>
  );
}

function DockTools({ tools }: { tools: Tool[] }) {
  return (
    <div className="flex h-[30px] shrink-0 items-center pb-0.5 pl-[3px]">
      {tools.map((tool) => (
        <Fragment key={tool.label}>
          <button type="button" aria-label={tool.label} className="flex h-6 w-[25px] items-center justify-center">
            {tool.icon}
          </button>
          {tool.menu && (
            <button type="button" aria-label={`${tool.label}选项`} className="flex h-6 w-3 items-center justify-center">
              <Caret className="text-[#a3a3a3]" />
            </button>
          )}
        </Fragment>
      ))}
    </div>
  );
}

/* ---------- map canvas ---------- */

/* Boundary vertices are stored as offsets in thirds of a pixel from a tile origin. */
function tile(ox: number, oy: number, vertices: string) {
  return vertices
    .split(" ")
    .map((pair) => {
      const [x, y] = pair.split(",").map(Number);
      return `${(ox + x / 3).toFixed(1)},${(oy + y / 3).toFixed(1)}`;
    })
    .join(" ");
}

const northEdge = tile(690, 200, "660,380 648,378 620,374 595,371 575,373 554,373 548,365 537,355 528,347 524,336 519,326 513,314 508,310 500,309 504,295 483,297 472,293 460,285 450,282 440,273 426,267 413,263 400,260 385,260 375,258 358,260 337,257 322,257 310,255 300,252 290,251 277,249 268,236 270,225 283,207 284,201 281,193 287,180 285,170 278,162 270,158 265,152 259,146 258,138 253,127 243,123 235,118 226,119 220,116 211,108 200,108 190,110 183,105 175,103 165,101 160,92 150,88 135,81 136,74 130,70 121,65 127,57 122,51 105,55 90,53 80,54 72,61 73,72 66,81 60,84 45,87 25,88 13,100 12,120 15,132 18,145 13,156");
const westEdge = tile(480, 200, "643,156 625,157 618,162 610,165 603,160 585,161 560,160 540,156 530,153 518,149 508,170 500,188 490,202 478,222 478,232 493,240 492,250 480,247 470,249 458,248 450,241 440,244 425,249 410,252 390,255 370,259 358,265 366,271 373,272 383,280 382,295 386,308 393,324 400,335 404,352 392,355 385,360 392,366 382,369 374,376 377,390 374,403 360,410 353,416 345,417 330,420 315,428 300,434 290,440 275,441 268,451 258,453 250,459 230,458 208,458 200,467 194,480 188,490 170,492 150,496 147,483 141,479 128,487 112,489 105,485 103,493 93,498 82,505 65,507 57,518 58,533 45,539 38,542 53,562 50,573 60,584 72,577 88,579 100,582 106,590");
const farWestEdge = tile(330, 374, "555,68 555,85 562,103 560,112 570,120 560,126 547,126 538,128 540,134 560,137 582,140 585,150 600,153 611,162 614,175 611,185 622,196 638,193 644,201 655,207 670,211 685,214 718,214");
const southWestEdge = tile(560, 400, "25,145 33,162 37,178 55,184 72,192 70,200 58,207 62,235 72,245 80,252 87,265 88,275 86,283 72,294 62,288 62,277 45,284 48,302 60,313 57,322 64,330 61,343 70,353 78,362 92,359 110,363 120,372 127,381 145,384 160,389 175,400 182,410 190,402 193,392 205,389 228,394 235,408 250,416 262,425 285,432 295,440 305,451 325,445 332,452 337,466 350,474 365,481 380,478 379,493 390,496 410,493 418,507 425,516 430,503 435,515 445,515 455,506 470,512 485,520 500,521");
const southEdge = tile(730, 380, "0,577 25,573 50,568 56,575 53,595 65,610 73,603 73,585 82,574 90,568 105,560 120,564 135,565 150,568 165,577 183,569 195,580 193,595 205,596 215,600 219,612 220,628 240,624 262,627 280,625 300,622 312,607 325,596 345,588 360,582 372,572 385,562 405,556 418,560 440,563 455,573 468,581 480,573 484,552 495,545 505,551 518,562 525,555 540,570");

const borders = [
  tile(690, 200, "554,373 550,377 536,383 542,400 540,410 530,417 508,423 499,431 490,423 472,433 455,440 440,452 428,465 424,478 405,481 382,482 374,505 370,528 362,543 352,552 354,560"),
  tile(690, 200, "595,371 611,400 627,429 617,437 630,453 648,464 660,470"),
  tile(730, 380, "120,47 135,43 165,36 200,27 232,19 250,15 270,13 275,25 303,26 312,35 320,31 333,32 342,52 360,52 380,54 400,53 413,59 425,62 435,57 447,57 450,42 465,40 461,11 480,11 500,20 518,28 540,22"),
  tile(730, 380, "120,47 125,57 140,55 140,83 165,97 172,108 180,119 152,128 150,140 165,148 167,168 145,165 128,162 117,160 113,167 98,167 85,170 90,178 103,179 102,195 90,203 88,208 93,225 105,230 103,240 106,258 95,268 107,280 120,300 135,308 150,316 185,317 205,325 222,327 228,334 250,335 275,339 300,346 320,348 347,340 358,347 372,352 378,363 386,370 388,382 405,384 420,383 425,391 428,377 436,379 445,388 455,385 452,372 465,369 478,367 485,348 490,343 510,345 520,352 540,362"),
  tile(730, 380, "490,343 484,337 490,326 495,320 491,308 502,300 492,295 485,290 485,278 500,272 505,262 520,265 540,270"),
  `${tile(560, 400, "72,192 92,189 113,187 120,174 125,163 135,153 142,141 155,143 165,143 180,143 200,148 220,148 228,138 238,133 250,125 270,128 272,138 285,142 300,143 320,142 335,142 350,133 368,127 385,122 405,127 425,118 435,103 450,99 465,97 480,95 495,91 500,94")} ${tile(730, 380, "0,152 20,148 35,147 48,153 60,154 75,158 90,162 98,167")}`,
];

function MapCanvas() {
  return (
    <main className="min-w-0 flex-1 overflow-hidden border-l border-[#b4b4b4] bg-white">
      <svg viewBox="362 122 544 472" preserveAspectRatio="xMinYMin slice" className="block h-full w-full" role="img" aria-label="province">
        <g stroke="#333" strokeWidth="1" strokeLinejoin="round">
          <polygon points={`${northEdge} ${westEdge} ${farWestEdge} ${southWestEdge} ${southEdge}`} fill="#ff9e17" />
          {borders.map((points) => (
            <polyline key={points} points={points} fill="none" />
          ))}
        </g>
      </svg>
    </main>
  );
}

/* ---------- application window ---------- */

export default function App() {
  return (
    <div className="flex h-screen flex-col overflow-hidden bg-[#efefef] font-['Noto_Sans','Noto_Sans_CJK_SC',sans-serif] text-[13px] leading-[19px] text-black">
      <div className="flex h-[22px] shrink-0 items-center bg-white">
        <svg viewBox="0 0 12 16" className="h-4 w-3 shrink-0" fill="none" aria-hidden="true">
          <circle cx="4" cy="8" r="5.500" stroke="#6aa82e" strokeWidth="3" />
          <path d="M5 8l7 7" stroke="#3f7a1c" strokeWidth="3" />
          <path d="M4 7h4v4z" fill="#ee7913" />
        </svg>
        <h1 className="pl-[5px] text-[13px]"><Label text="*未命名的工程 — QGIS" /></h1>
      </div>

      <nav className="flex h-[21px] shrink-0 items-center gap-3.5 overflow-hidden pl-1 whitespace-nowrap">
        {menus.map(([name, key]) => (
          <button key={name} type="button" className="shrink-0">
            <Label text={name} />
            {key && <>(<span className="underline underline-offset-2">{key}</span>)</>}
          </button>
        ))}
        <button type="button" className="shrink-0"><span className="underline underline-offset-2">R</span>aster</button>
      </nav>

      <div role="toolbar" aria-label="工程与地图" className="flex h-10 shrink-0 items-center overflow-hidden border-y border-t-[#d5d5d5] border-b-[#b4b4b4] bg-linear-to-b from-[#fafafa] to-[#ededed]">
        <Grip className="w-1.5 justify-end pr-1" />
        <ToolGroup tools={projectTools} />
        <Grip />
        <ToolGroup tools={navigationTools} />
        <Grip />
        <ToolGroup tools={attributeTools} />
      </div>
      <div role="toolbar" aria-label="数字化" className="flex h-[39px] shrink-0 items-center overflow-hidden border-b border-[#b4b4b4] bg-linear-to-b from-[#fafafa] to-[#ededed]">
        <Grip className="w-1.5 justify-end pr-1" />
        <ToolGroup tools={digitizingTools} disabled />
      </div>

      <div className="flex min-h-0 flex-1">
        <div role="toolbar" aria-label="数据源" aria-orientation="vertical" className="flex w-[46px] shrink-0 flex-col border-r border-[#b4b4b4] bg-linear-to-r from-[#fafafa] to-[#ebebeb]">
          <span className="flex h-3 shrink-0 items-center justify-center">
            <svg viewBox="0 0 18 5" className="h-[5px] w-[18px]" aria-hidden="true">
              <path d="M0 .5h18M0 4.500h18" stroke="#b5b5b5" strokeDasharray="1 2" />
            </svg>
          </span>
          {dataSources.map((source) => (
            <div key={source.label} className="relative flex h-8 shrink-0 items-center">
              <button type="button" aria-label={source.label} className="flex h-8 w-7 items-center justify-center">
                {source.icon}
              </button>
              {source.menu && (
                <button type="button" aria-label={`${source.label}选项`} className="flex h-8 w-4 items-center justify-center">
                  <Caret />
                </button>
              )}
              {source.marked && <span className="pointer-events-none absolute -top-2 left-0 z-10 h-[46px] w-[50px] border-3 border-[#fb3737]" />}
            </div>
          ))}
        </div>

        <aside className="flex w-[315px] shrink-0 flex-col">
          <DockHeader title="浏览器 (2)" />
          <DockTools tools={browserTools} />
          <div className="mr-1.5 flex shrink-0 border border-[#b4b4b4] bg-white">
            <ul className="min-w-0 flex-1">
              {treeItems.map((item) => (
                <li key={item.label} className="flex h-[19px] items-center">
                  <span className="flex w-4 justify-center">
                    {item.open && (
                      <button type="button" aria-label={`展开 ${item.label}`}>
                        <svg viewBox="0 0 4 8" className="h-2 w-1" fill="#555" aria-hidden="true">
                          <path d="M0 0l4 4-4 4z" />
                        </svg>
                      </button>
                    )}
                  </span>
                  <span className="ml-[3px]">{item.icon}</span>
                  <span className="ml-1.5 whitespace-nowrap"><Label text={item.label} /></span>
                </li>
              ))}
            </ul>
            <div className="flex w-3.5 shrink-0 flex-col border-l border-[#b4b4b4]" aria-hidden="true">
              <span className="flex h-3.5 items-center justify-center border-b border-[#b4b4b4]"><Caret className="rotate-180 text-[#555]" /></span>
              <span className="grow-[215] basis-0 bg-linear-to-r from-white to-[#ededed]" />
              <span className="grow-[41] basis-0 border-y border-[#b4b4b4] bg-[#e4e4e4]" />
              <span className="flex h-3.5 items-center justify-center"><Caret /></span>
            </div>
          </div>
          <span className="flex h-1.5 shrink-0 items-center justify-center">
            <svg viewBox="0 0 17 1" className="h-px w-[17px]" aria-hidden="true"><path d="M0 .5h17" stroke="#aaa" strokeDasharray="1 2" /></svg>
          </span>
          <div className="flex min-h-0 flex-1">
            <section className="flex min-w-0 flex-1 flex-col">
              <div className="-mr-1.5"><DockHeader title="图层" /></div>
              <DockTools tools={layerTools} />
              <div className="flex-1 border border-b-0 border-[#b4b4b4] bg-white">
                <label className="flex h-5 items-center pl-[23px]">
                  <span className="relative flex size-3.5 shrink-0">
                    <input type="checkbox" defaultChecked className="peer size-3.5 appearance-none border border-[#b4b4b4] bg-white" />
                    <svg viewBox="0 0 14 14" className="pointer-events-none absolute inset-0 hidden size-3.5 peer-checked:block" fill="none" aria-hidden="true">
                      <path d="M3.500 6.500l2.500 4 4.500-8" stroke="#000" strokeWidth="2" />
                    </svg>
                  </span>
                  <span className="ml-1.5 size-4 shrink-0 border border-[#a8690f] bg-[#ff9e17]" />
                  <span className="ml-[3px] flex h-5 flex-1 items-center rounded-xs border border-[#b8d6ea] bg-linear-to-b from-[#f6fafe] to-[#e6f3fc] pl-0.5 text-xs font-bold underline underline-offset-2">
                    province
                  </span>
                </label>
              </div>
            </section>
            <span className="flex w-1.5 shrink-0 items-center justify-center">
              <svg viewBox="0 0 1 17" className="h-[17px] w-px" aria-hidden="true"><path d="M.5 0v17" stroke="#aaa" strokeDasharray="1 2" /></svg>
            </span>
          </div>
        </aside>

        <MapCanvas />
      </div>
    </div>
  );
}
